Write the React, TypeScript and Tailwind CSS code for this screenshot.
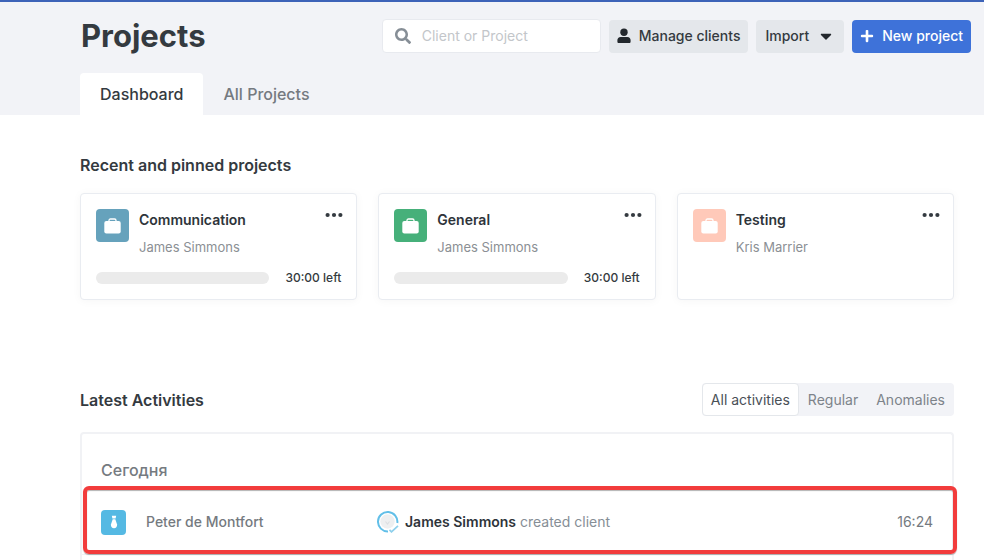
import React, { useState } from 'react';
import { FaCaretDown, FaPlus, FaSearch } from 'react-icons/fa';

interface Project {
  name: string;
  client: string;
  color: string;
  left?: string;
}

const projects: Project[] = [
  { name: 'Communication', client: 'James Simmons', color: 'bg-[#66a2bc]', left: '30:00 left' },
  { name: 'General', client: 'James Simmons', color: 'bg-[#46b07a]', left: '30:00 left' },
  { name: 'Testing', client: 'Kris Marrier', color: 'bg-[#ffc9b9]' },
];

const tabs = ['Dashboard', 'All Projects'];
const filters = ['All activities', 'Regular', 'Anomalies'];

function UserIcon() {
  return (
    <svg viewBox="0 0 14 16" className="h-4 w-3.5 fill-[#23282d]" aria-hidden="true">
      <circle cx="7" cy="4.2" r="3.7" />
      <path d="M3.6 8.9h6.8c2 0 3.2 1.3 3.2 3.2v1.7c0 .8-.5 1.3-1.3 1.3H1.7c-.8 0-1.3-.5-1.3-1.3v-1.7c0-1.9 1.2-3.2 3.2-3.2z" />
    </svg>
  );
}

function BriefcaseIcon() {
  return (
    <svg viewBox="0 0 17 16" className="h-4 w-[17px]" aria-hidden="true">
      <path
        d="M5 3.6V2.5C5 1.5 5.6 1 6.5 1h4c.9 0 1.5.5 1.5 1.5v1.1"
        fill="none"
        stroke="white"
        strokeWidth="1.3"
      />
      <rect x="0.3" y="3" width="16.4" height="12.4" rx="2" fill="white" />
    </svg>
  );
}

function TieIcon() {
  return (
    <svg viewBox="0 0 8 14" className="h-3.5 w-2 fill-white" aria-hidden="true">
      <path d="M1.8.8h4.4l-.6 2.6H2.4z" />
      <path d="M2.7 4.2h2.6L7 9.200c.5 1.900-.9 4-3 4s-3.500-2.100-3-4z" />
    </svg>
  );
}

function Avatar() {
  return (
    <svg viewBox="0 0 22 22" className="size-[22px]" aria-hidden="true">
      <circle cx="10.5" cy="10.5" r="7.2" fill="#eeeff0" />
      <path d="M8.5 10.5l2 2.5 2-2.5" fill="none" stroke="#dddfe1" strokeWidth="1.2" />
      <path d="M11 20.4A9.7 9.7 0 1 1 20.3 12" fill="none" stroke="#62bfe8" strokeWidth="2" />
      <path d="M12.5 18.8l2 2 6.5-6" fill="none" stroke="#8fd0ec" strokeWidth="1.8" />
    </svg>
  );
}

function ProjectCard({ project }: { project: Project }) {
  return (
    <article className="flex h-[107px] flex-col rounded-sm border border-[#e9ecf1] bg-white p-[15px] shadow-[0_1px_10px_rgba(0,0,0,0.04)]">
      <div className="flex items-start">
        <span className={`flex size-[33px] items-center justify-center rounded-sm ${project.color}`}>
          <BriefcaseIcon />
        </span>
        <div className="ml-2.5 flex-1">
          <h3 className="mt-px text-sm font-semibold leading-5 text-[#2e343a]">{project.name}</h3>
          <p className="mt-[7px] text-[13px] leading-5 text-[#8b8f94]">{project.client}</p>
        </div>
        <button type="button" aria-label={`${project.name} options`} className="-mr-0.5 flex h-3 items-center">
          <svg viewBox="0 0 18 6" className="h-1.5 w-[18px] fill-[#343a40]" aria-hidden="true">
            <circle cx="2.6" cy="3" r="2.1" />
            <circle cx="9" cy="3" r="2.1" />
            <circle cx="15.4" cy="3" r="2.1" />
          </svg>
        </button>
      </div>
      {project.left && (
        <div className="mt-[13px] flex items-center gap-4">
          <div className="h-3 flex-1 rounded-full bg-[#ebebeb]"></div>
          <span className="text-xs font-medium leading-4 text-[#343a40]">{project.left}</span>
        </div>
      )}
    </article>
  );
}

export default function App() {
  const [activeTab, setActiveTab] = useState('Dashboard');
  const [filter, setFilter] = useState('All activities');

  return (
    <div className="flex min-h-screen flex-col bg-white font-['Inter','Noto_Sans',sans-serif] text-[#343a40]">
      <header className="border-t-2 border-[#3d63b8] bg-[#f2f3f7] pl-20">
        <div className="flex items-center justify-between pt-[15px] pr-[13px]">
          <h1 className="pl-px text-[31px] font-bold leading-[38px]">Projects</h1>
          <div className="flex items-center gap-2 text-sm font-medium">
            <label className="flex h-[34px] w-[219px] items-center rounded-sm border border-[#e8eaef] bg-white pl-3">
              <FaSearch className="size-4 shrink-0 text-[#868e96]" />
              <input
                type="text"
                aria-label="Client or Project"
                placeholder="Client or Project"
                className="ml-[11px] w-full min-w-0 bg-transparent font-normal outline-none placeholder:text-[#c3c6ca]"
              />
            </label>
            <button type="button" className="flex h-[33px] items-center gap-2 rounded-sm bg-[#e4e7eb] px-2">
              <UserIcon />
              Manage clients
            </button>
            <button type="button" className="flex h-[33px] items-center gap-2 rounded-sm bg-[#e4e7eb] px-[9px]">
              Import
              <FaCaretDown className="size-[18px] text-[#23282d]" />
            </button>
            <button type="button" className="flex h-[33px] items-center gap-2 rounded-sm bg-[#3e72d9] px-2 text-white">
              <FaPlus className="size-3.5" />
              New project
            </button>
          </div>
        </div>
        <nav className="mt-[18px] flex">
          {tabs.map((tab) => (
            <button
              key={tab}
              type="button"
              onClick={() => setActiveTab(tab)}
              className={`h-[42px] rounded-t-sm px-5 text-base font-medium ${
                activeTab === tab ? 'bg-white text-[#343a40]' : 'text-[#757a80]'
              }`}
            >
              {tab}
            </button>
          ))}
        </nav>
      </header>

      <main className="flex flex-1 flex-col pl-20 pr-[30px] pt-10">
        <h2 className="text-base font-semibold leading-5">Recent and pinned projects</h2>
        <div className="mt-[18px] grid grid-cols-3 gap-[21px]">
          {projects.map((project) => (
            <ProjectCard key={project.name} project={project} />
          ))}
        </div>

        <div className="mt-[83px] flex items-center justify-between">
          <h2 className="text-base font-semibold leading-5">Latest Activities</h2>
          <div className="flex h-[33px] rounded-sm bg-[#f2f3f7] text-sm font-normal">
            {filters.map((item) => (
              <button
                key={item}
                type="button"
                onClick={() => setFilter(item)}
                className={`rounded-sm border px-2 ${
                  filter === item
                    ? 'border-[#e4e7eb] bg-white text-[#495057]'
                    : 'border-transparent text-[#7d838a]'
                }`}
              >
                {item}
              </button>
            ))}
          </div>
        </div>

        <section className="mt-4 flex-1 rounded-t-sm border-2 border-b-0 border-[#f1f2f5]">
          <h3 className="px-[19px] pt-6 text-base font-medium leading-6 text-[#757a80]">Сегодня</h3>
          <div className="relative mt-1 flex h-[68px] items-center px-[19px] pt-1 text-sm">
            <span className="flex size-[25px] items-center justify-center rounded-sm bg-[#55b9e3]">
              <TieIcon />
            </span>
            <span className="ml-5 w-[231px] font-medium text-[#757a80]">Peter de Montfort</span>
            <Avatar />
            <p className="ml-1.5 flex-1 text-[#868e96]">
              <span className="font-semibold text-[#2e343a]">James Simmons</span> created client
            </p>
            <time className="text-[#757a80]">16:24</time>
            <div className="pointer-events-none absolute -right-[5px] bottom-0 left-px top-0 rounded-md border-4 border-[#f23c3c] shadow-[0_1px_1px_rgba(0,0,0,0.3),inset_0_1px_1px_rgba(0,0,0,0.3)]"></div>
          </div>
          <div className="border-t border-[#f1f2f5]"></div>
        </section>
      </main>
    </div>
  );
}
